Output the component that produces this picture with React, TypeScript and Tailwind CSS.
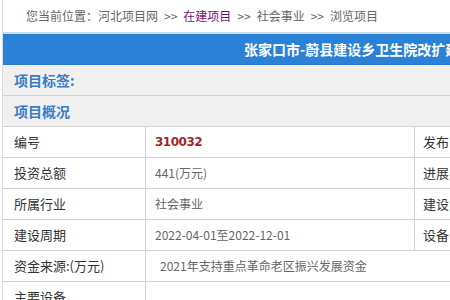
export default function App() {
  const rows = [
    { label: '编号', value: '310032', side: '发布', code: true },
    { label: '投资总额', value: '441(万元)', side: '进展' },
    { label: '所属行业', value: '社会事业', side: '建设' },
    { label: '建设周期', value: '2022-04-01至2022-12-01', side: '设备' },
  ]

  return (
    <div
      className="w-[450px] h-[300px] overflow-hidden bg-white text-[12px]"
      style={{ fontFamily: '"Noto Sans CJK SC", "Noto Sans", sans-serif' }}
    >
      <div className="ml-[2px] border-l border-[#d8dde3]">
        {/* breadcrumb */}
        <div className="h-[34px] flex items-center pl-[23px] border-b-2 border-[#c9dcf0] text-[#666] whitespace-nowrap">
          <span>您当前位置：河北项目网</span>
          <span className="px-[6px]">&gt;&gt;</span>
          <span className="text-[#7a0f7a]">在建项目</span>
          <span className="px-[6px]">&gt;&gt;</span>
          <span>社会事业</span>
          <span className="px-[6px]">&gt;&gt;</span>
          <span>浏览项目</span>
        </div>

        {/* title bar */}
        <div className="h-[31px] flex items-center bg-[#2b81d6] pl-[241px] whitespace-nowrap overflow-hidden">
          <span className="text-white font-bold text-[14px]">张家口市-蔚县建设乡卫生院改扩建项目</span>
        </div>

        <div className="h-[31px] flex items-center pl-[11px] bg-[#f0f0f0] border-b border-[#d2d2d2]">
          <span className="text-[#3b7dc4] font-bold text-[14px]">项目标签:</span>
        </div>
        <div className="h-[31px] flex items-center pl-[11px] bg-[#f0f0f0] border-b border-[#d2d2d2]">
          <span className="text-[#3b7dc4] font-bold text-[14px]">项目概况</span>
        </div>

        {rows.map((r) => (
          <div key={r.label} className="h-[31px] flex border-b border-[#d2d2d2]">
            <div className="w-[143px] shrink-0 flex items-center pl-[11px] border-r border-[#d2d2d2] text-[#333] text-[13px]">
              {r.label}
            </div>
            <div className="w-[269px] shrink-0 flex items-center pl-[9px] border-r border-[#d2d2d2] text-[#666]">
              {r.code ? (
                <span
                  className="font-bold text-[12px] text-[#a3262a] tracking-[-0.5px]"
                  style={{ fontFamily: '"DejaVu Sans", sans-serif' }}
                >
                  {r.value}
                </span>
              ) : (
                r.value
              )}
            </div>
            <div className="flex-1 flex items-center pl-[8px] text-[#333] text-[13px] whitespace-nowrap">
              {r.side}
            </div>
          </div>
        ))}

        <div className="h-[31px] flex border-b border-[#d2d2d2]">
          <div className="w-[143px] shrink-0 flex items-center pl-[11px] border-r border-[#d2d2d2] text-[#333] text-[13px]">
            资金来源:(万元)
          </div>
          <div className="flex-1 flex items-center pl-[14px] text-[#666]">
            2021年支持重点革命老区振兴发展资金
          </div>
        </div>

        <div className="h-[31px] flex border-b border-[#d2d2d2]">
          <div className="w-[143px] shrink-0 flex items-center pl-[11px] border-r border-[#d2d2d2] text-[#333] text-[13px]">
            主要设备
          </div>
          <div className="flex-1" />
        </div>
      </div>
    </div>
  )
}
